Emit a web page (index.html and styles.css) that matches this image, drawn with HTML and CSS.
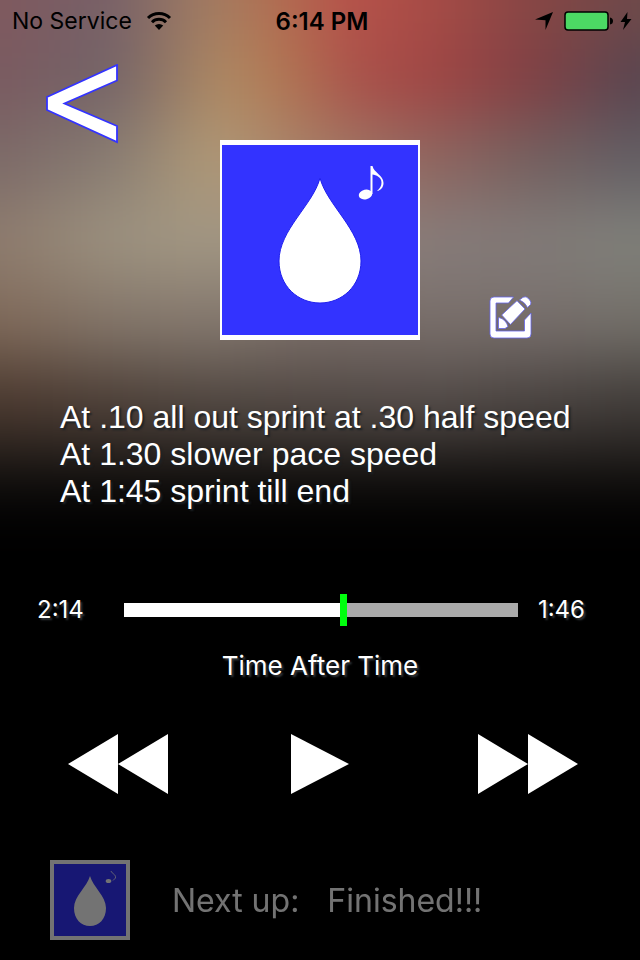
FILE: index.html
```html
<!DOCTYPE html>
<html lang="en">
<head>
    <meta charset="UTF-8">
    <meta name="viewport" content="width=device-width, initial-scale=1.0">
    <title>Now Playing</title>
    <link rel="stylesheet" href="styles.css">
</head>
<body>
    <!-- blurred artwork behind the player -->
    <svg class="backdrop" viewBox="0 0 640 600" preserveAspectRatio="none" aria-hidden="true">
        <defs>
            <filter id="soften" filterUnits="userSpaceOnUse" x="-120" y="-150" width="880" height="900" color-interpolation-filters="sRGB">
                <feGaussianBlur stdDeviation="24 32"/>
            </filter>
            <linearGradient id="row1" gradientUnits="userSpaceOnUse" x1="0" x2="640">
                <stop offset="0" stop-color="#80595e"/><stop offset=".17" stop-color="#766068"/><stop offset=".33" stop-color="#a27c62"/><stop offset=".42" stop-color="#b07052"/><stop offset=".54" stop-color="#b7524a"/><stop offset=".67" stop-color="#a84c46"/><stop offset=".83" stop-color="#874644"/><stop offset="1" stop-color="#6e4a4a"/>
            </linearGradient>
            <linearGradient id="row2" gradientUnits="userSpaceOnUse" x1="0" x2="640">
                <stop offset="0" stop-color="#7a5a60"/><stop offset=".17" stop-color="#736468"/><stop offset=".35" stop-color="#b08a62"/><stop offset=".45" stop-color="#b07452"/><stop offset=".56" stop-color="#a9504a"/><stop offset=".67" stop-color="#a04644"/><stop offset=".83" stop-color="#804044"/><stop offset="1" stop-color="#574550"/>
            </linearGradient>
            <linearGradient id="row3" gradientUnits="userSpaceOnUse" x1="0" x2="640">
                <stop offset="0" stop-color="#7c6a68"/><stop offset=".17" stop-color="#887c72"/><stop offset=".33" stop-color="#b09a78"/><stop offset=".5" stop-color="#a47c66"/><stop offset=".67" stop-color="#906660"/><stop offset=".83" stop-color="#74605f"/><stop offset="1" stop-color="#625f65"/>
            </linearGradient>
            <linearGradient id="row4" gradientUnits="userSpaceOnUse" x1="0" x2="640">
                <stop offset="0" stop-color="#8e7c6e"/><stop offset=".17" stop-color="#9c917f"/><stop offset=".33" stop-color="#a39884"/><stop offset=".5" stop-color="#96887a"/><stop offset=".67" stop-color="#877c7a"/><stop offset=".83" stop-color="#827b79"/><stop offset="1" stop-color="#80817a"/>
            </linearGradient>
            <linearGradient id="row5" gradientUnits="userSpaceOnUse" x1="0" x2="640">
                <stop offset="0" stop-color="#806a5a"/><stop offset=".17" stop-color="#84766a"/><stop offset=".33" stop-color="#85796f"/><stop offset=".5" stop-color="#7a6e69"/><stop offset=".83" stop-color="#786f6c"/><stop offset="1" stop-color="#74706a"/>
            </linearGradient>
            <linearGradient id="row6" gradientUnits="userSpaceOnUse" x1="0" x2="640">
                <stop offset="0" stop-color="#4c3a30"/><stop offset=".33" stop-color="#524842"/><stop offset=".67" stop-color="#544c49"/><stop offset="1" stop-color="#423d3a"/>
            </linearGradient>
        </defs>
        <g filter="url(#soften)">
            <rect x="-120" y="-150" width="880" height="190" fill="url(#row1)"/>
            <rect x="-120" y="40" width="880" height="80" fill="url(#row2)"/>
            <rect x="-120" y="120" width="880" height="80" fill="url(#row3)"/>
            <rect x="-120" y="200" width="880" height="80" fill="url(#row4)"/>
            <rect x="-120" y="280" width="880" height="80" fill="url(#row5)"/>
            <rect x="-120" y="360" width="880" height="80" fill="url(#row6)"/>
            <rect x="-120" y="440" width="880" height="50" fill="#191614"/>
            <rect x="-120" y="490" width="880" height="260" fill="#000"/>
        </g>
    </svg>

    <div class="status-bar">
        <div class="carrier">
            <span>No Service</span>
            <svg width="26" height="20" viewBox="0 0 26 20" aria-hidden="true">
                <path d="M2 7a15.500 15.500 0 0 1 22 0" fill="none" stroke="#000" stroke-width="3"/>
                <path d="M6 11.200a10 10 0 0 1 14 0" fill="none" stroke="#000" stroke-width="3"/>
                <path d="M8.800 14.600a6 6 0 0 1 8.400 0L13 19z" fill="#000"/>
            </svg>
        </div>
        <div class="clock">6:14 PM</div>
        <div class="indicators">
            <svg width="20" height="20" viewBox="0 0 20 20" aria-hidden="true">
                <path d="M19 1L11.500 19V9.200L1 8.500z" fill="#000"/>
            </svg>
            <svg width="50" height="20" viewBox="0 0 50 20" aria-hidden="true">
                <rect x="1" y="1" width="43" height="18" rx="3" fill="#4cd964" stroke="#000" stroke-width="1.500"/>
                <path d="M46 6.500q3 .5 3 3.500t-3 3.500z" fill="#000"/>
            </svg>
            <svg width="12" height="20" viewBox="0 0 12 20" aria-hidden="true">
                <path d="M7.500 1L.5 11H5L3 19L11.500 8H7z" fill="#000"/>
            </svg>
        </div>
    </div>

    <div class="header">
        <button type="button" class="back-button" aria-label="Back">
            <svg width="74" height="80" viewBox="0 0 74 80">
                <path d="M72 1V16.500L19.500 39.500L72 62V78L2 46V33z" fill="#fff" stroke="#3333ff" stroke-width="1.800"/>
            </svg>
        </button>
        <svg class="album-art" width="200" height="200" viewBox="0 0 200 200" role="img" aria-label="Album art">
            <rect width="200" height="200" fill="#fff"/>
            <rect x="2" y="5" width="196" height="190" fill="#3333ff"/>
            <path d="M100 38C107 65 141 90 141 121C141 146 122 163 100 163S59 146 59 121C59 90 93 65 100 38z" fill="#fff" stroke="#2020ee"/>
            <g fill="#fff">
                <ellipse cx="145.500" cy="54.500" rx="6.800" ry="4.800" transform="rotate(-12 145.500 54.500)"/>
                <path d="M150.500 26h2C154 33 163.500 35 163.500 43C163.500 47 161 50.500 157 51C160 48 161.500 46 161.500 42.500C161.500 37 156 35 152.500 34.500V54h-2z"/>
            </g>
        </svg>
        <button type="button" class="edit-button" aria-label="Edit notes">
            <svg width="44" height="44" viewBox="0 0 44 44">
                <g fill="#fff" stroke="#6666ee" stroke-width=".8">
                    <path d="M24.500 1H5Q1 1 1 5V38Q1 42 5 42H38Q42 42 42 38V17L35.500 24V35H7V7H19.500z"/>
                    <path d="M12.700 19L28 4.700L36 13L21.500 28.500z"/>
                    <path d="M30.500 4L34 1.300Q37 -.5 40 3T41.500 8.500L38.500 11.500Q36 6 30.500 4z"/>
                    <path d="M10 21.500Q17 23.500 19 30.500L16 32.500H9.500V22z"/>
                </g>
            </svg>
        </button>
    </div>

    <p class="notes">At .10 all out sprint at .30 half speed<br>At 1.30 slower pace speed<br>At 1:45 sprint till end</p>

    <div class="progress">
        <span class="time">2:14</span>
        <input type="range" min="0" max="240" value="134" aria-label="Song position">
        <span class="time">1:46</span>
    </div>

    <h1 class="song-title">Time After Time</h1>

    <div class="controls">
        <button type="button" class="previous" aria-label="Previous">
            <svg width="100" height="60" viewBox="0 0 100 60"><path d="M0 30L50 0V60zM50 30L100 0V60z" fill="#fff"/></svg>
        </button>
        <button type="button" aria-label="Play">
            <svg width="58" height="60" viewBox="0 0 58 60"><path d="M0 0L58 30L0 60z" fill="#fff"/></svg>
        </button>
        <button type="button" class="next" aria-label="Next">
            <svg width="100" height="60" viewBox="0 0 100 60"><path d="M0 0L50 30L0 60zM50 0L100 30L50 60z" fill="#fff"/></svg>
        </button>
    </div>

    <div class="next-up">
        <svg width="80" height="80" viewBox="0 0 80 80" aria-hidden="true">
            <rect width="80" height="80" fill="#fff"/>
            <rect x="4" y="4" width="72" height="72" fill="#3333ff"/>
            <path d="M40 16C43 27 56 36 56 48C56 59 49 66 40 66S24 59 24 48C24 36 37 27 40 16z" fill="#fff"/>
            <ellipse cx="58.500" cy="21" rx="2.800" ry="2" fill="#fff"/>
            <path d="M61 11C62 14 66 14 65.500 18L63 20.500" fill="none" stroke="#fff" stroke-opacity=".8"/>
        </svg>
        <span class="next-label">Next up:</span>
        <span>Finished!!!</span>
    </div>
</body>
</html>
```

FILE: styles.css
```css
* {
    box-sizing: border-box;
}

body {
    margin: 0;
    position: relative;
    background-color: #000;
    color: #fff;
    font-family: Inter, "Liberation Sans", sans-serif;
}

svg {
    display: block;
}

button {
    padding: 0;
    border: none;
    background: none;
    cursor: pointer;
}

.backdrop {
    position: absolute;
    top: 0;
    left: 0;
    width: 100%;
    height: 600px;
    z-index: -1;
}

.status-bar {
    display: grid;
    grid-template-columns: 1fr auto 1fr;
    align-items: center;
    height: 42px;
    padding: 0 8px 0 12px;
    color: #000;
    font-size: 24px;
}

.carrier {
    display: flex;
    align-items: center;
    gap: 14px;
    font-size: 23px;
}

.clock {
    font-weight: 600;
}

.indicators {
    display: flex;
    align-items: center;
    justify-content: flex-end;
    gap: 6px;
}

.indicators svg:first-child {
    margin-right: 4px;
}

.header {
    display: grid;
    grid-template-columns: 1fr 200px 1fr;
    padding-top: 22px;
}

.back-button {
    align-self: start;
    justify-self: start;
    margin-left: 45px;
}

.album-art {
    margin-top: 76px;
}

.edit-button {
    align-self: end;
    justify-self: start;
    margin-left: 69px;
}

.notes {
    margin: 59px 60px 0;
    font-family: "Liberation Sans", Arial, sans-serif;
    font-size: 32px;
    line-height: 37px;
    text-shadow: 2px 2px 2px #1c2226;
}

.progress {
    display: flex;
    align-items: center;
    margin-top: 84px;
    padding: 0 55px 0 37px;
}

.time {
    font-size: 24px;
    line-height: 32px;
    text-shadow: 2px 2px 2px #33383c;
}

input[type="range"] {
    -webkit-appearance: none;
    appearance: none;
    flex: 1;
    min-width: 0;
    height: 32px;
    margin: 0 20px 0 40px;
    background: none;
}

input[type="range"]::-webkit-slider-runnable-track {
    height: 14px;
    background: linear-gradient(to right, #fff 56%, #aaa 56%);
}

input[type="range"]::-webkit-slider-thumb {
    -webkit-appearance: none;
    width: 7px;
    height: 32px;
    margin-top: -9px;
    background-color: #00ff0d;
}

.song-title {
    margin: 22px 0 0;
    font-size: 26px;
    font-weight: 400;
    line-height: 36px;
    text-align: center;
    text-shadow: 2px 2px 2px #33383c;
}

.controls {
    display: grid;
    grid-template-columns: 1fr auto 1fr;
    margin-top: 50px;
    padding: 0 62px;
}

.previous {
    justify-self: start;
    margin-left: 6px;
}

.next {
    justify-self: end;
}

.next-up {
    display: flex;
    align-items: center;
    margin: 66px 0 20px;
    padding-left: 50px;
    font-size: 32px;
    opacity: 0.45;
}

.next-label {
    margin: 0 28px 0 42px;
}
```
